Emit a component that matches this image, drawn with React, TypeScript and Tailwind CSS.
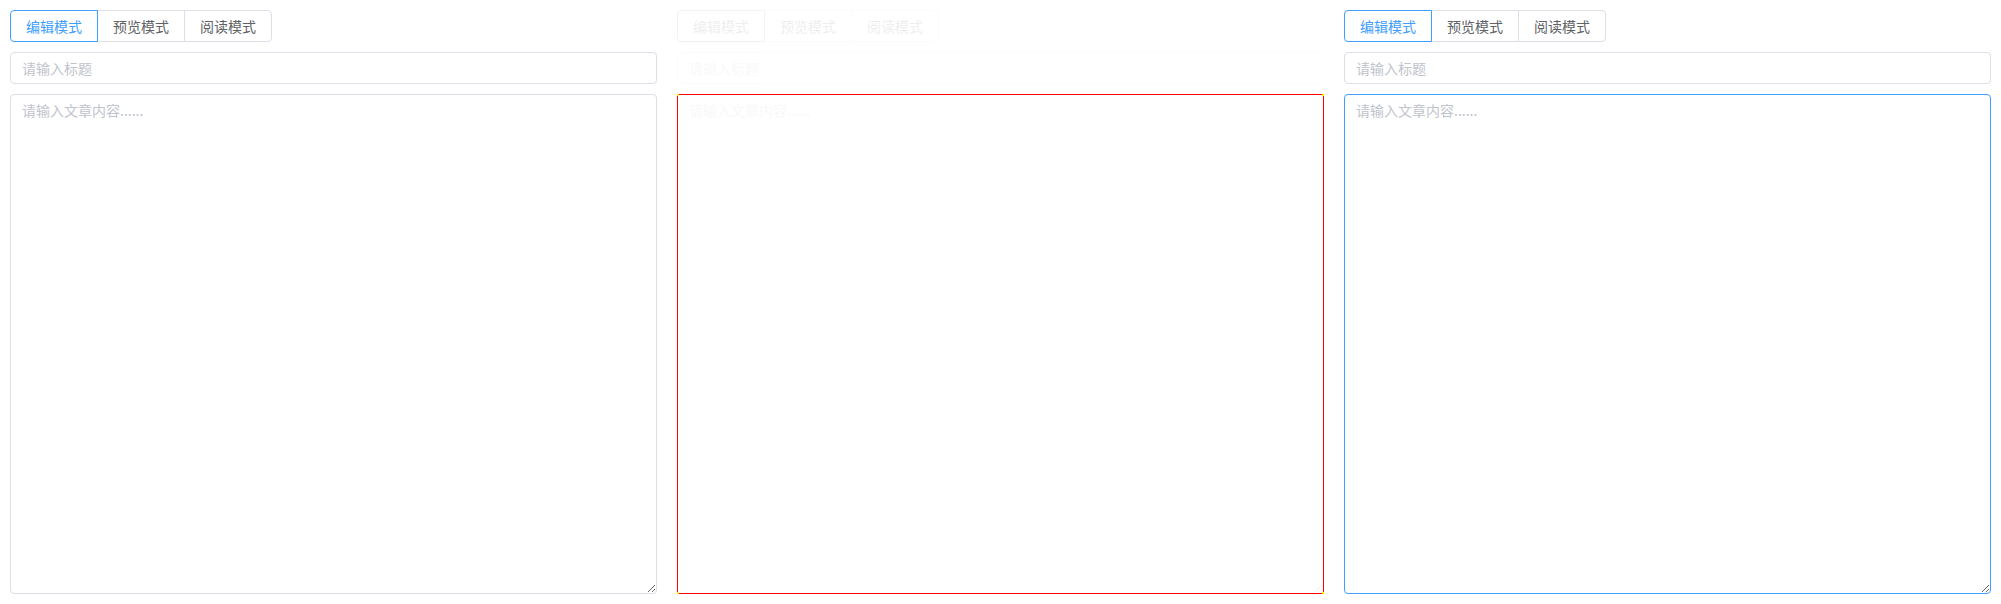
import { useState } from 'react';

const modes = ['编辑模式', '预览模式', '阅读模式'];

function ModeGroup({ active, muted }: { active: number; muted?: boolean }) {
    return (
        <div className="flex">
            {modes.map((m, i) => {
                const isActive = i === active;
                let tone = 'border-[#dcdfe6] text-[#606266]';
                if (isActive) tone = muted ? 'z-10 border-[#8c8c8c] text-[#606266]' : 'z-10 border-[#409eff] text-[#409eff]';
                return (
                    <button
                        key={m}
                        className={`relative h-[32px] px-[15px] text-[14px] leading-none border bg-white ${
                            i > 0 ? '-ml-px' : ''
                        } ${i === 0 ? 'rounded-l-[4px]' : ''} ${i === modes.length - 1 ? 'rounded-r-[4px]' : ''} ${tone}`}
                    >
                        {m}
                    </button>
                );
            })}
        </div>
    );
}

function Editor({ focused, dragging }: { focused?: boolean; dragging?: boolean }) {
    const [title, setTitle] = useState('');
    const [body, setBody] = useState('');

    return (
        <div className="flex flex-col gap-[10px] min-w-0">
            <div className={dragging ? 'opacity-10' : ''}>
                <ModeGroup active={0} muted={dragging} />
            </div>
            <input
                value={title}
                onChange={e => setTitle(e.target.value)}
                placeholder="请输入标题"
                className={`h-[32px] w-full rounded-[4px] border border-[#dcdfe6] px-[11px] text-[14px] text-[#606266] placeholder:text-[#c0c4cc] outline-none ${
                    dragging ? 'opacity-10' : ''
                }`}
            />
            <div className="relative">
                <textarea
                    value={body}
                    onChange={e => setBody(e.target.value)}
                    placeholder="请输入文章内容......"
                    className={`block h-[500px] w-full rounded-[4px] border px-[11px] py-[5px] text-[14px] leading-[1.5] text-[#606266] placeholder:text-[#c0c4cc] outline-none ${
                        focused ? 'border-[#409eff]' : 'border-[#dcdfe6]'
                    } ${dragging ? 'opacity-10' : ''}`}
                />
                {/* drop target outline */}
                {dragging && (
                    <div className="pointer-events-none absolute inset-0 border border-[#ff0000]">
                        <span className="absolute -left-px -top-px h-[2px] w-[2px] bg-[#ffee00]" />
                        <span className="absolute -right-px -top-px h-[2px] w-[2px] bg-[#ffee00]" />
                        <span className="absolute -left-px -bottom-px h-[2px] w-[2px] bg-[#ffee00]" />
                        <span className="absolute -right-px -bottom-px h-[2px] w-[2px] bg-[#ffee00]" />
                    </div>
                )}
            </div>
        </div>
    );
}

export default function App() {
    return (
        <div
            className="grid grid-cols-3 gap-[20px] px-[10px] pt-[10px] bg-white min-h-[604px]"
            style={{ fontFamily: '"Noto Sans CJK SC", "Noto Sans", sans-serif' }}
        >
            <Editor />
            <Editor dragging />
            <Editor focused />
        </div>
    );
}
